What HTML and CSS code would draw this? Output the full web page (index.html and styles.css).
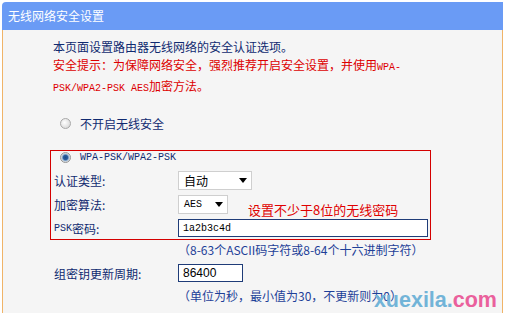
FILE: index.html
```html
<!DOCTYPE html>
<html>

<head>
    <meta charset="utf-8" />
    <title>无线网络安全设置</title>
    <link rel="stylesheet" href="styles.css">
</head>

<body>
    <div class="page">
        <!-- Title bar -->
        <div class="panel-head">无线网络安全设置</div>
        <div class="panel-body">
            <p class="intro">本页面设置路由器无线网络的安全认证选项。</p>
            <p class="warn">安全提示：为保障网络安全，强烈推荐开启安全设置，并使用<span class="en">WPA-</span><br><span class="en">PSK/WPA2-PSK AES</span>加密方法。</p>

            <div class="option option-off"><span class="radio"></span>不开启无线安全</div>

            <!-- WPA settings, boxed in red -->
            <div class="wpa-box">
                <div class="option option-wpa"><span class="radio checked"></span><span class="en">WPA-PSK/WPA2-PSK</span></div>
                <div class="form form-wpa">
                    <div class="label">认证类型:</div>
                    <div class="field">
                        <span class="select select-wide">自动<i class="arrow"></i></span>
                    </div>
                    <div class="label">加密算法:</div>
                    <div class="field">
                        <span class="select select-narrow"><span class="en">AES</span><i class="arrow"></i></span>
                        <span class="note">设置不少于8位的无线密码</span>
                    </div>
                    <div class="label"><span class="en-label">PSK</span>密码:</div>
                    <div class="field">
                        <span class="input input-long"><span class="en">1a2b3c4d</span></span>
                    </div>
                </div>
            </div>

            <div class="form form-outer">
                <div></div>
                <div class="hint">（8-63个ASCII码字符或8-64个十六进制字符）</div>
                <div class="label">组密钥更新周期:</div>
                <div class="field">
                    <span class="input input-short">86400</span>
                </div>
                <div></div>
                <div class="hint">（单位为秒，最小值为30，不更新则为0）</div>
            </div>
        </div>
        <!-- site watermark over the corner -->
        <div class="watermark">xuexila.<span class="watermark-com">com</span></div>
    </div>
</body>

</html>
```

FILE: styles.css
```css
* {
    padding: 0;
    margin: 0;
    box-sizing: border-box;
}

body {
    background-color: #ffffff;
    font-family: "Noto Sans CJK SC", sans-serif;
    font-size: 12px;
}

.page {
    position: relative;
    margin: 2px 2px 0 2px;
    height: 312px;
}

.panel-head {
    height: 28px;
    line-height: 28px;
    padding-left: 6px;
    background-color: #6a9bf5;
    color: #ffffff;
    border-radius: 4px 0 0 0;
}

.panel-body {
    background-color: #f5f5f5;
    border-left: 1px solid #f0b468;
    border-right: 1px solid #f0b468;
    padding: 8px 0 8px 47px;
}

.intro,
.warn {
    line-height: 18px;
    padding-left: 3px;
}

.intro {
    color: #102a70;
}

.warn {
    color: #dd0000;
}

.en {
    font-family: "Liberation Mono", monospace;
    font-size: 10px;
}

.en-label {
    font-family: "Liberation Mono", monospace;
    font-size: 10px;
}

.option {
    display: flex;
    align-items: center;
    color: #102a70;
}

.option-off {
    margin-top: 16px;
    height: 18px;
    padding-left: 10px;
}

.option-wpa {
    height: 12px;
    padding-left: 6px;
}

.radio {
    display: inline-block;
    width: 11px;
    height: 11px;
    margin-right: 9px;
    border-radius: 50%;
    border: 1px solid #a8a8a8;
    background: radial-gradient(circle at 40% 40%, #ffffff, #cfcfcf);
}

.radio.checked {
    border-color: #949494;
    background: radial-gradient(circle, #1d4a86 0, #2a5d9c 2.2px, #9fbad6 3.4px, #e2e2e2 4.4px);
}

.wpa-box {
    margin-top: 18px;
    width: 381px;
    border: 1px solid #d40000;
    padding: 0 0 1px 3px;
}

.form {
    display: grid;
    grid-template-columns: 124px 1fr;
    column-gap: 0;
}

.form-wpa {
    margin-top: 7px;
    grid-auto-rows: 20px;
    row-gap: 4px;
}

.form-outer {
    margin-top: 1px;
    padding-left: 4px;
    grid-template-rows: 18px 20px 18px;
    row-gap: 4px;
}

.label {
    display: flex;
    align-items: center;
    color: #102a70;
}

.field {
    display: flex;
    align-items: center;
}

.select {
    display: flex;
    align-items: center;
    justify-content: space-between;
    height: 19px;
    padding: 0 4px 0 5px;
    background-color: #ffffff;
    border: 1px solid #cfcfcf;
    color: #000000;
}

.select-wide {
    width: 74px;
}

.select-narrow {
    width: 50px;
}

.arrow {
    width: 0;
    height: 0;
    border-left: 4px solid transparent;
    border-right: 4px solid transparent;
    border-top: 5px solid #000000;
}

.note {
    align-self: flex-start;
    margin-left: 20px;
    padding-top: 9px;
    line-height: 14px;
    font-size: 13px;
    color: #e00000;
    white-space: nowrap;
}

.input {
    display: flex;
    align-items: center;
    height: 18px;
    padding-left: 4px;
    background-color: #ffffff;
    border: 1px solid #1f3c78;
    color: #000000;
}

.input-long {
    width: 250px;
}

.input-short {
    width: 65px;
    font-family: "Liberation Sans", sans-serif;
}

.hint {
    line-height: 18px;
    color: #1e3f98;
    white-space: nowrap;
}

.watermark {
    position: absolute;
    right: 6px;
    top: 288px;
    line-height: 21px;
    font-family: "Liberation Sans", sans-serif;
    font-size: 21.5px;
    font-weight: bold;
    color: #72b4d8;
}

.watermark-com {
    color: #ea609c;
}
```
